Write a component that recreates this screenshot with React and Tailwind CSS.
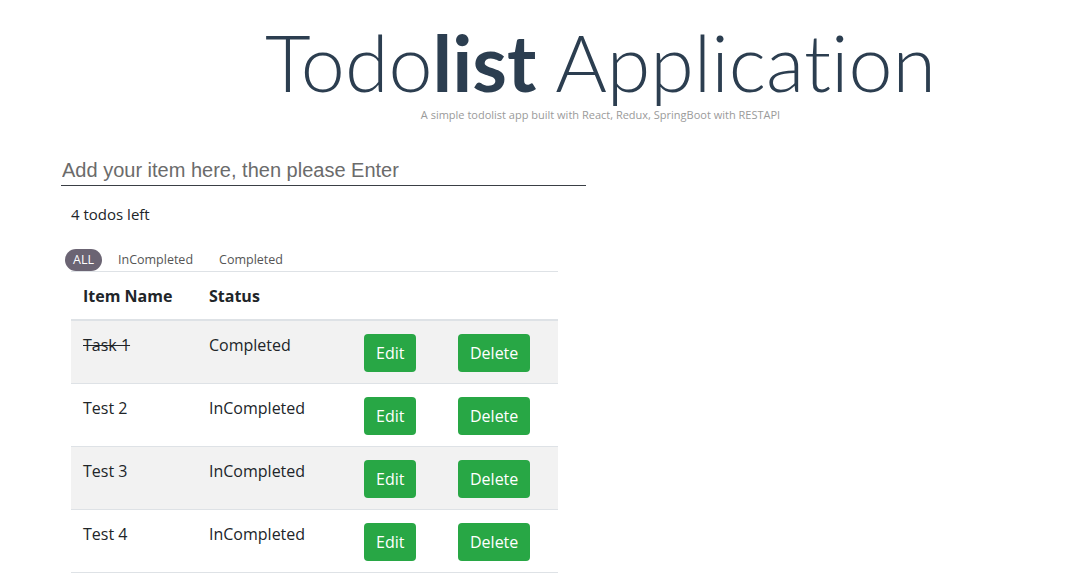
import { useState } from "react";

const todos = [
  { id: 1, name: "Task 1", done: true },
  { id: 2, name: "Test 2", done: false },
  { id: 3, name: "Test 3", done: false },
  { id: 4, name: "Test 4", done: false },
];

export default function App() {
  const [text, setText] = useState("");
  const [tab, setTab] = useState("ALL");

  return (
    <div className="min-h-screen bg-white font-['Open_Sans',sans-serif] text-[#212529]">
      {/* Header */}
      <div className="pt-[14px] pl-[114px] text-center">
        <h1 className="font-['Lato',sans-serif] text-[79px] leading-[96px] font-light text-[#2c3e50] [font-variant-ligatures:none]">
          Todo<span className="font-bold">list</span> Application
        </h1>
        <p className="-mt-[2px] text-[11px] leading-[14px] text-[#9a9a9a]">
          A simple todolist app built with React, Redux, SpringBoot with RESTAPI
        </p>
      </div>

      <div className="mt-[32px] ml-[61px] w-[525px]">
        <input
          value={text}
          onChange={(e) => setText(e.target.value)}
          placeholder="Add your item here, then please Enter"
          className="w-full border-b border-[#3a3f45] pt-[2px] pb-[1px] pl-[1px] font-['Liberation_Sans',sans-serif] text-[20px] leading-[28px] outline-none placeholder:text-[#6b6b6b]"
        />

        <div className="ml-[10px] mt-[18px] text-[15px] leading-[20px]">{todos.length} todos left</div>

        <div className="ml-[10px] mt-[25px] w-[487px]">
          <div className="-ml-[6px] flex items-center gap-[6px] text-[12.5px]">
            {["ALL", "InCompleted", "Completed"].map((t) => (
              <button
                key={t}
                onClick={() => setTab(t)}
                className={
                  tab === t
                    ? "h-[22px] rounded-full bg-[#6b6473] px-[8px] text-white"
                    : "h-[22px] rounded-full px-[10px] text-[#555]"
                }
              >
                {t}
              </button>
            ))}
          </div>

          <table className="w-full border-t border-[#dee2e6] text-[16px] leading-[24px]">
            <thead>
              <tr className="border-b-2 border-[#dee2e6] text-left">
                <th className="w-[126px] px-[12px] pt-[12px] pb-[11px] font-bold">Item Name</th>
                <th className="w-[155px] px-[12px] pt-[12px] pb-[11px] font-bold">Status</th>
                <th className="w-[94px] px-[12px]"></th>
                <th className="px-[12px]"></th>
              </tr>
            </thead>
            <tbody>
              {todos.map((t, i) => (
                <tr key={t.id} className={(i % 2 === 0 ? "bg-[#f2f2f2] " : "") + "border-b border-[#dee2e6] align-top"}>
                  <td className={"px-[12px] pt-[12px] " + (t.done ? "line-through" : "")}>{t.name}</td>
                  <td className="px-[12px] pt-[12px]">{t.done ? "Completed" : "InCompleted"}</td>
                  <td className="px-[12px] pt-[13px] pb-[11px]">
                    <button className="h-[38px] rounded-[4px] bg-[#28a745] px-[12px] text-white">Edit</button>
                  </td>
                  <td className="px-[12px] pt-[13px] pb-[11px]">
                    <button className="h-[38px] rounded-[4px] bg-[#28a745] px-[12px] text-white">Delete</button>
                  </td>
                </tr>
              ))}
            </tbody>
          </table>
        </div>
      </div>
    </div>
  );
}
